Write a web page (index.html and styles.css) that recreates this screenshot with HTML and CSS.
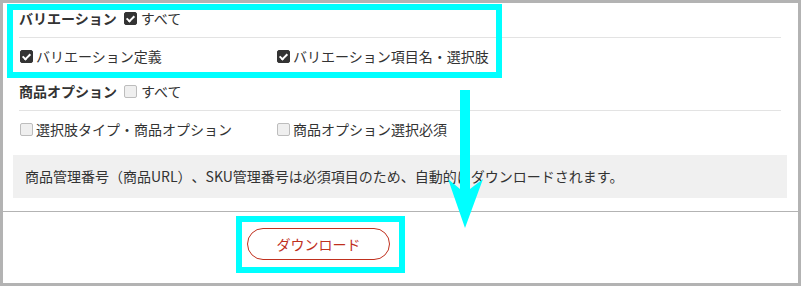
FILE: index.html
```html
<!DOCTYPE html>
<html lang="ja">
<head>
    <meta charset="UTF-8">
    <title>ダウンロード項目</title>
    <link rel="stylesheet" href="styles.css">
</head>
<body>
    <div class="frame">
        <div class="group">
            <div class="group-head">
                <span class="group-title">バリエーション</span>
                <span class="box checked"></span><span class="all">すべて</span>
            </div>
            <div class="group-row">
                <div class="item"><span class="box checked"></span>バリエーション定義</div>
                <div class="item"><span class="box checked"></span>バリエーション項目名・選択肢</div>
            </div>
        </div>
        <div class="group">
            <div class="group-head">
                <span class="group-title">商品オプション</span>
                <span class="box"></span><span class="all">すべて</span>
            </div>
            <div class="group-row">
                <div class="item"><span class="box"></span>選択肢タイプ・商品オプション</div>
                <div class="item"><span class="box"></span>商品オプション選択必須</div>
            </div>
        </div>
        <div class="notice">商品管理番号（商品URL）、SKU管理番号は必須項目のため、自動的にダウンロードされます。</div>
        <div class="actions">
            <button class="btn-download" type="button">ダウンロード</button>
        </div>

        <!-- annotation overlay -->
        <div class="mark mark-variation"></div>
        <div class="mark mark-button"></div>
        <svg class="arrow" width="801" height="286" viewBox="0 0 801 286">
            <rect x="460" y="90" width="10" height="100" fill="#00ffff"/>
            <polygon points="448,179 460,189 470,189 483,179 465,228" fill="#00ffff"/>
        </svg>
    </div>
</body>
</html>
```

FILE: styles.css
```css
body {
    margin: 0;
    font-family: "Noto Sans CJK JP", "Liberation Sans", sans-serif;
    font-size: 14px;
    color: #333;
    text-spacing-trim: space-all;
}

.frame {
    position: relative;
    width: 801px;
    height: 286px;
    box-sizing: border-box;
    border: 3px solid #b3b3b3;
    background: #fff;
}

.group {
    margin: 0 17px 0 16px;
}

.group-head {
    display: flex;
    align-items: center;
    height: 24px;
    padding: 3px 0 7px;
    line-height: 24px;
    border-bottom: 1px solid #e3e3e3;
}

.group-title {
    font-weight: bold;
    margin-right: 7px;
}

.all {
    margin-left: 4px;
}

.group-row {
    display: grid;
    grid-template-columns: 257px 257px;
    padding: 6px 0 8px 1px;
    line-height: 24px;
}

.item {
    display: flex;
    align-items: center;
}

.item .box {
    margin-right: 3px;
}

.box {
    position: relative;
    display: inline-block;
    width: 13px;
    height: 13px;
    box-sizing: border-box;
    border: 1px solid #bdbdbd;
    border-radius: 2px;
    background: #efefef;
}

.box.checked {
    border-color: #333;
    background: #333;
}

.box.checked::after {
    content: "";
    position: absolute;
    left: 3px;
    top: 1px;
    width: 3px;
    height: 6px;
    border: solid #fff;
    border-width: 0 2px 2px 0;
    transform: rotate(45deg);
}

.notice {
    margin: 6px 11px 0 10px;
    height: 43px;
    padding-left: 12px;
    line-height: 43px;
    background: #f0f0f0;
}

.actions {
    margin-top: 13px;
    border-top: 1px solid #b3b3b3;
    padding: 16px 0 0 244px;
}

.btn-download {
    width: 143px;
    height: 32px;
    border: 1px solid #c0301e;
    border-radius: 16px;
    background: #fff;
    color: #c0301e;
    font-family: inherit;
    font-size: 14px;
    cursor: pointer;
}

.mark {
    position: absolute;
    border: 6px solid #00ffff;
}

.mark-variation {
    left: 4px;
    top: 1px;
    width: 483px;
    height: 62px;
}

.mark-button {
    left: 233px;
    top: 213px;
    width: 157px;
    height: 45px;
}

.arrow {
    position: absolute;
    left: -3px;
    top: -3px;
}
```
